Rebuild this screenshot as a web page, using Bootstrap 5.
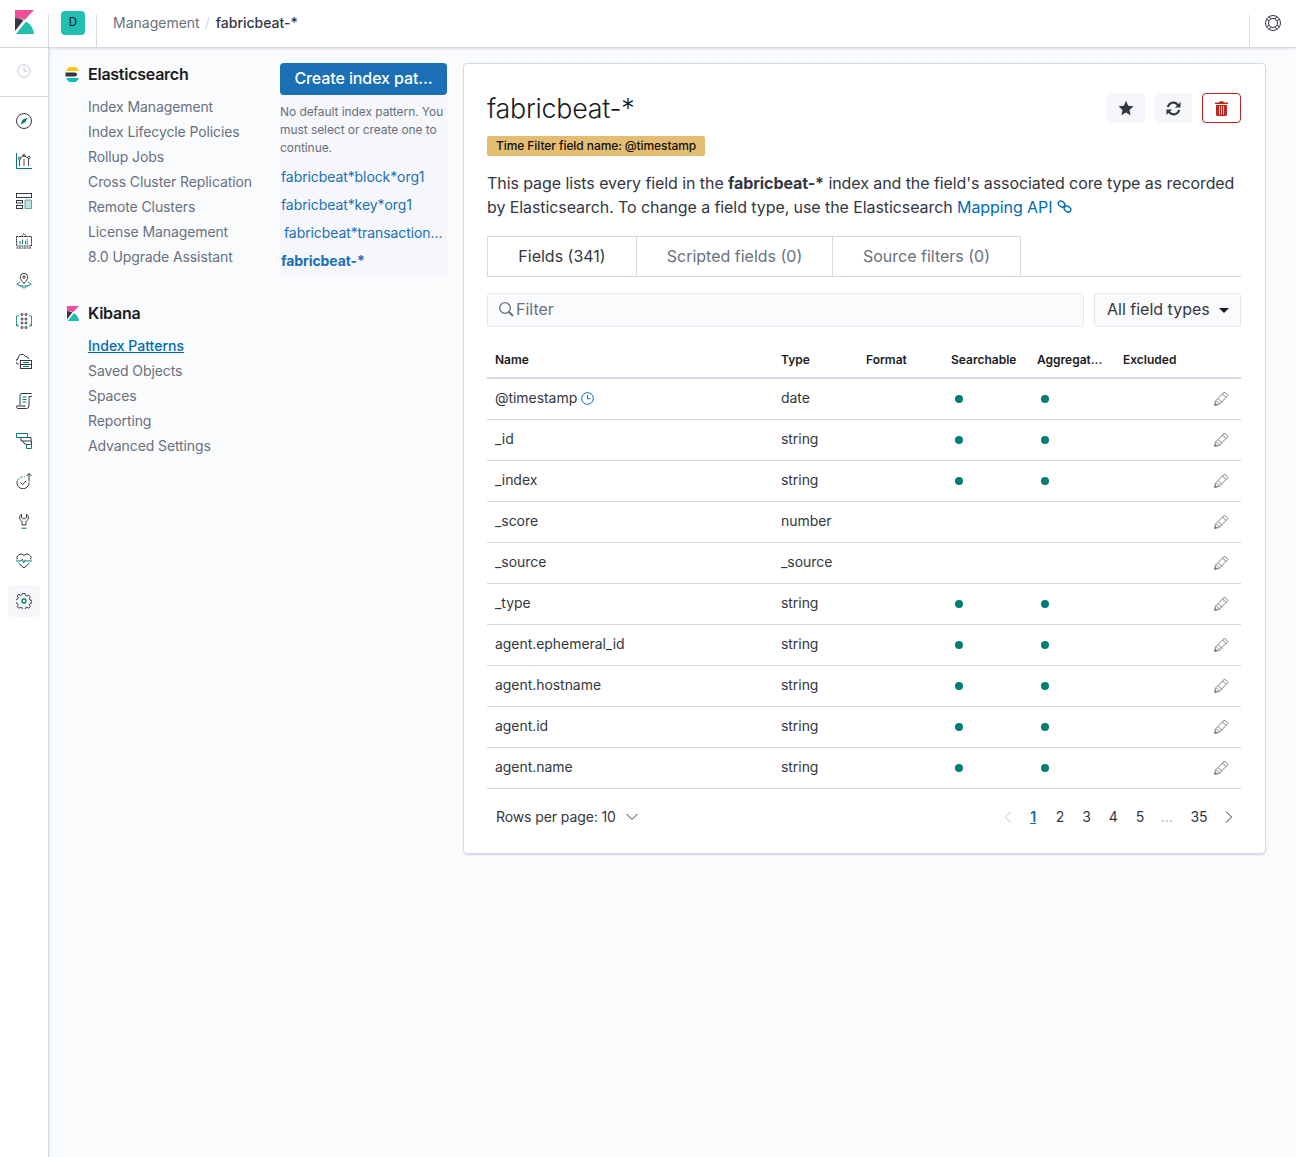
<!DOCTYPE html>
<html lang="en">
<head>
<meta charset="utf-8">
<title>fabricbeat-*</title>
<link href="https://cdn.jsdelivr.net/npm/bootstrap@5.3.0/dist/css/bootstrap.min.css" rel="stylesheet">
<style>
html,body{height:100%}
body{font-family:Inter,"Liberation Sans",sans-serif;background:#fafbfd;color:#343741;font-size:14px;width:1296px;overflow-x:hidden}
a{text-decoration:none}
.k-top{height:48px;background:#fff;border-bottom:1px solid #d3dae6;box-shadow:0 2px 2px -1px rgba(152,162,179,.3)}
.k-logo-cell{width:49px;height:48px;padding:10px 0 0 15px}
.k-top-sep{width:1px;height:33px;background:#d3dae6;margin-top:15px}
.k-sep-first{margin-left:-1px}
.k-avatar-cell{width:47px;padding:11px 0 0 12px}
.k-avatar{width:24px;height:24px;background:#20bfb1;border-radius:4px;font-size:11.5px;color:#111;line-height:22px;text-align:center}
.k-crumb{padding-left:16px;line-height:46px;color:#69707d;font-size:14px}
.k-crumb i{font-style:normal;color:#d3dae6;margin:0 6px 0 5px}
.k-crumb b{font-weight:500;color:#343741}
.k-help{width:46px;padding:15px 0 0 15px}
.k-help svg{display:block}
.k-main{height:1109px}
.k-rail{width:49px;background:#fff;border-right:1px solid #d3dae6;box-shadow:1px 0 2px rgba(152,162,179,.2);flex:none}
.k-recent{height:49px;border-bottom:1px solid #d3dae6;padding-top:16px;text-align:center}
.k-rail-list{padding-top:4px}
.k-rail-item{height:40px;display:flex;align-items:center;justify-content:center;width:32px;margin-left:8px;border-radius:4px}
.k-rail-item.on{background:#f5f7fa;height:32px;margin-top:4px}
.k-rail svg{display:block}
.k-side{width:231px;padding:16px 0 0 16px;flex:none}
.k-side-h{display:flex;align-items:center;height:20px;font-size:16px;font-weight:600;color:#1a1c21;gap:8px;margin-bottom:10px;letter-spacing:-.25px}
.k-kib-logo{margin:0 1px 0 2px}
.k-side-list{margin-left:23px}
.k-side-list a{display:block;height:25px;line-height:25px;color:#69707d;font-size:14px;letter-spacing:-.1px}
.k-side-list a.on{color:#006bb4;font-weight:500;text-decoration:underline;letter-spacing:0}
.k-gap{height:34px}
.k-index{width:167px;margin-top:15px;flex:none;margin-right:16px}
.k-create{background:#1a6fb5;color:#fff;border:0;width:167px;height:32px;border-radius:4px;font-size:16px;font-weight:500;padding:0 0 2px;box-shadow:0 2px 2px -1px rgba(54,97,126,.3);display:block;letter-spacing:-.1px}
.k-index-body{background:#f5f7fa;height:182px;padding-top:8px}
.k-index-note{font-size:12px;line-height:18px;color:#69707d;margin:0 0 6px;height:54px;letter-spacing:-.07px}
.k-index-list a{display:block;height:28px;line-height:28px;color:#1a6fb5;font-size:14px;padding-left:1px;white-space:nowrap;letter-spacing:-.09px}
.k-index-list a.tr{padding-left:4px}
.k-index-list a.on{font-weight:700;color:#1a6fb5}
.k-panel{width:803px;height:791px;margin-top:15px;background:#fff;border:1px solid #d3dae6;border-radius:4px;box-shadow:0 2px 2px -1px rgba(152,162,179,.3),0 1px 5px -2px rgba(152,162,179,.3);padding:24px 24px 0 23px;flex:none}
.k-title{font-size:26.8px;font-weight:300;color:#1a1c21;line-height:40px;margin:0;letter-spacing:-.25px}
.k-acts{gap:10px;padding-top:5px}
.k-act{width:39px;height:30px;border-radius:4px;background:#f5f7fa;border:0;display:flex;align-items:center;justify-content:center;padding:0}
.k-act-mid{width:37px}
.k-act-del{background:#fff;border:1px solid #bd271e}
.k-time{display:inline-block;background:#e4bd73;font-size:12px;font-weight:500;color:#111;height:20px;line-height:20px;padding:0 9px;border-radius:2px;margin-top:8px;letter-spacing:-.08px}
.k-desc{font-size:16px;line-height:24px;margin:15px 0 0;color:#343741;letter-spacing:-.08px}
.k-desc b{font-weight:700}
.k-desc a{color:#006bb4}
.k-link-ic{vertical-align:-1px}
.k-tabs{display:flex;margin-top:17px;border-bottom:1px solid #d3dae6;height:41px}
.k-tab{height:40px;border:1px solid #d3dae6;border-bottom:0;margin-left:-1px;line-height:39px;font-size:16px;color:#69707d;text-align:center;background:#fff}
.k-tab:first-child{margin-left:0;color:#343741;width:150px}
.k-tab.t2{width:197px}.k-tab.t3{width:189px}
.k-filters{display:flex;gap:10px;margin-top:16px}
.k-filter{width:597px;height:34px;background:#fafbfd;border:1px solid #e3e7ef;border-radius:3px;display:flex;align-items:center;padding:0 0 2px 10px;font-size:16px;color:#69707d;gap:2px}
.k-select{width:147px;height:34px;background:#fafbfd;border:1px solid #e3e7ef;border-radius:3px;font-size:16px;color:#343741;padding-left:12px;line-height:30px;position:relative}
.k-select::after{content:"";position:absolute;right:11px;top:14px;border:5px solid transparent;border-top:5px solid #1a1c21;border-bottom:0}
.k-table{width:754px;table-layout:fixed;margin:16px 0 0;border-collapse:collapse;font-size:14px;color:#343741;letter-spacing:-.05px}
.k-table th{font-size:12px;font-weight:600;color:#1a1c21;padding:0 8px;height:35px;border-bottom:2px solid #d3dae6;white-space:nowrap;vertical-align:middle;letter-spacing:0}
.k-table td{height:41px;padding:0 8px;border-bottom:1px solid #d3dae6;vertical-align:middle;padding-bottom:2px}
.k-c1{width:286px}.k-c2{width:85px}.k-c4{width:86px}
.k-dot{display:block;width:8px;height:8px;border-radius:50%;background:#017d73;margin:2px 0 0 4px}
.k-pencil{display:block;margin:2px 4px 0 auto}
.k-clock{vertical-align:-2px;margin-left:0}
.k-foot{display:flex;justify-content:space-between;align-items:center;margin-top:16px;height:24px;padding:0 7px 0 9px}
.k-rows{display:flex;align-items:center;gap:9px;font-size:14px;letter-spacing:-.1px}
.k-pages{display:flex;align-items:center;font-size:14px;color:#343741}
.k-pages span{display:block;text-align:center}
.k-pg{width:26.7px}
.k-pg.on{color:#006bb4;font-weight:600;text-decoration:underline}
.k-pg.off{color:#abb4c4}
.k-pg.last{width:36px;padding-left:2px}
.k-prev{margin-right:7px}
</style>
</head>
<body>
<header class="k-top d-flex">
  <div class="k-logo-cell">
    <svg width="19" height="24" viewBox="0 0 19 24" style="display:block"><path fill="#f04e98" d="M0 0h19L9.500 10A20 20 0 0 0 0 8z"/><path fill="#343741" d="M0 8a20 20 0 0 1 8.500 2.200L0 21z"/><path fill="#20bfb1" d="M11 11.500 1 24h18a16 16 0 0 0-8-12.500z"/></svg>
  </div>
  <div class="k-top-sep k-sep-first"></div>
  <div class="k-avatar-cell"><div class="k-avatar">D</div></div>
  <div class="k-top-sep"></div>
  <div class="k-crumb flex-grow-1">Management<i>/</i><b>fabricbeat-*</b></div>
  <div class="k-top-sep"></div>
  <div class="k-help">
    <svg width="16" height="16" viewBox="0 0 16 16" fill="none" stroke="#343741"><circle cx="8" cy="8" r="7.500"/><circle cx="8" cy="8" r="4.500"/><path d="M11.900 5.750 14.500 4.250M10.250 4.100 11.750 1.500M4.100 5.750 1.500 4.250M5.750 4.100 4.250 1.500M11.900 10.250 14.500 11.750M10.250 11.900 11.750 14.500M4.100 10.250 1.500 11.750M5.750 11.900 4.250 14.500"/></svg>
  </div>
</header>
<div class="k-main d-flex">
  <nav class="k-rail">
    <div class="k-recent"><svg class="mx-auto" width="14" height="14" viewBox="0 0 14 14" fill="none" stroke="#c2c8d2"><circle cx="7" cy="7" r="6.200"/><path d="M7 3v4.200h3.200"/></svg></div>
    <div class="k-rail-list">
      <div class="k-rail-item"><svg width="16" height="16" viewBox="0 0 16 16" fill="none" stroke="#343741"><circle cx="8" cy="8" r="7.500"/><path fill="#017d73" stroke="none" d="M11.500 4.500 9.300 9.300 4.500 11.500l2.200-4.800z"/></svg></div>
      <div class="k-rail-item"><svg width="16" height="16" viewBox="0 0 16 16" fill="none" stroke="#343741" stroke-width=".9"><path stroke="#017d73" stroke-width="1" d="M.5 0v15.500H16"/><path d="M3.500 13V7M8 13V6M12.500 13V6M3.500 5.500 7.500 2.500l4.500 2.500"/><circle cx="3.500" cy="5.500" r="1.200"/><circle cx="8" cy="2.500" r="1.200"/><circle cx="13" cy="4.500" r="1.200"/></svg></div>
      <div class="k-rail-item"><svg width="16" height="16" viewBox="0 0 16 16" fill="none" stroke="#343741"><rect x=".5" y=".5" width="15" height="4"/><rect x=".5" y="7.500" width="6" height="2.500"/><rect x=".5" y="12.500" width="6" height="3"/><path fill="#bfe3e0" stroke="#017d73" stroke-opacity=".6" d="M9 7h6.500v8.500H9z"/></svg></div>
      <div class="k-rail-item"><svg width="16" height="16" viewBox="0 0 16 16" fill="none" stroke="#343741"><path d="M.5 3.500h15v9.500H.5zM5 3.500 8 .5l3 3M.5 15h15" stroke-dasharray="2 .5"/><path stroke="#017d73" d="M4 11V8M6.500 11V6.500M9.500 11V8M12 7h-1.500M12 9h-1.500M12 11h-1.500"/></svg></div>
      <div class="k-rail-item"><svg width="16" height="16" viewBox="0 0 16 16" fill="none" stroke="#343741"><path d="M8 10.500C5.500 7.500 4.200 6 4.200 4.200a3.800 3.800 0 0 1 7.600 0C11.800 6 10.500 7.500 8 10.500z"/><circle cx="8" cy="4.200" r="1.200"/><path stroke="#017d73" stroke-opacity=".8" d="M4 9 .8 11 8 15.200 15.200 11 12 9M2.500 12.500 8 13l5.500-.5"/></svg></div>
      <div class="k-rail-item"><svg width="16" height="16" viewBox="0 0 16 16" fill="none" stroke="#343741"><circle cx="6" cy="1.500" r="1"/><circle cx="10" cy="1.500" r="1"/><circle cx="6" cy="6" r="1"/><circle cx="10" cy="6" r="1"/><circle cx="6" cy="10" r="1"/><circle cx="10" cy="10" r="1"/><circle cx="6" cy="14.500" r="1"/><circle cx="10" cy="14.500" r="1"/><path stroke="#017d73" stroke-opacity=".8" d="M3 3H.5v10H3M13 3h2.500v10H13M1 11l1.500 1.500M15 11l-1.500 1.500"/></svg></div>
      <div class="k-rail-item"><svg width="16" height="16" viewBox="0 0 16 16" fill="none" stroke="#343741"><path d="M3 11H2.500A2.500 2.500 0 0 1 2 6a4 4 0 0 1 7.500-2.500A3.500 3.500 0 0 1 13 6"/><rect x="4.500" y="7.500" width="11" height="8"/><path d="M4.500 11.500h11"/><path stroke="#017d73" d="M7 9.500h6M7 13.500h6"/></svg></div>
      <div class="k-rail-item"><svg width="16" height="16" viewBox="0 0 16 16" fill="none" stroke="#343741"><path d="M4 12.500V2.500A2 2 0 0 1 6 .5h9.500M15.500.5a1.500 1.500 0 0 1-1.500 3h-1V13a2.500 2.500 0 0 1-2.500 2.500H2A1.800 1.800 0 0 1 .5 13H9v1"/><path stroke="#017d73" d="M6.500 4h4M6.500 6.500h4M6.500 9h4"/></svg></div>
      <div class="k-rail-item"><svg width="16" height="16" viewBox="0 0 16 16" fill="none" stroke="#343741"><path stroke="#017d73" d="M.5.500h11v4H.5zM10.500 11.500h5v4h-5z"/><path d="M5 4.500 5 8h10V4.500h-3.500M7 8a4 4 0 0 0 4 3.500M15.500 8v3.500"/></svg></div>
      <div class="k-rail-item"><svg width="16" height="16" viewBox="0 0 16 16" fill="none" stroke="#343741"><path d="M13 .5v8M10.500 3 13 .5 15.500 3"/><path d="M13 9.500A6 6 0 0 1 1 10a6 6 0 0 1 .5-2.500"/><path stroke="#017d73" stroke-dasharray="2 1.500" d="M2 7a6 6 0 0 1 7-3"/><path d="M4.500 9.500 6.500 11.500 10 8"/></svg></div>
      <div class="k-rail-item"><svg width="16" height="16" viewBox="0 0 16 16" fill="none" stroke="#343741"><path d="M5.500 1.200A4 4 0 0 0 5.500 8c.7.500.5 1.500.5 4h4c0-2.500-.2-3.500.5-4a4 4 0 0 0 0-6.800V4.500L8 6 5.500 4.500z"/><path stroke="#017d73" d="M5.500 15.200h5"/></svg></div>
      <div class="k-rail-item"><svg width="16" height="16" viewBox="0 0 16 16" fill="none" stroke="#343741"><path d="M1.200 6.500A4 4 0 0 1 8 2.500a4 4 0 0 1 6.800 4M2.500 10 8 15l5.500-5"/><path stroke="#017d73" d="M0 8h5l1.200-1.800L7.800 10 9.200 6.800 10.300 8H16"/></svg></div>
      <div class="k-rail-item on"><svg width="16" height="16" viewBox="0 0 16 16" fill="none" stroke="#343741"><path d="M6.700.5h2.600l.4 2 1.500.7 1.800-1.100 1.800 1.800-1.100 1.800.7 1.500 2 .4v2.600l-2 .4-.7 1.500 1.100 1.800-1.800 1.800-1.800-1.100-1.500.7-.4 2H6.700l-.4-2-1.500-.7-1.800 1.100-1.800-1.800 1.100-1.800-.7-1.500-2-.4V6.700l2-.4.7-1.500-1.100-1.800 1.800-1.800 1.800 1.100 1.500-.7z" transform="scale(.97)"/><circle cx="8" cy="8" r="2" stroke="#017d73" stroke-width="1.300"/></svg></div>
    </div>
  </nav>
  <aside class="k-side">
    <div class="k-side-h"><svg width="15" height="15" viewBox="0 0 15 15"><path fill="#fec514" d="M1.200 4A6.600 6.600 0 0 1 13.800 4z"/><path fill="#343741" d="M.5 5.500h9.500a2 2 0 0 1 0 4H.5z"/><path fill="#00bfb3" d="M1.200 11h12.600A6.600 6.600 0 0 1 1.200 11z"/></svg>Elasticsearch</div>
    <div class="k-side-list">
      <a href="#">Index Management</a><a href="#">Index Lifecycle Policies</a><a href="#">Rollup Jobs</a><a href="#">Cross Cluster Replication</a><a href="#">Remote Clusters</a><a href="#">License Management</a><a href="#">8.0 Upgrade Assistant</a>
    </div>
    <div class="k-gap"></div>
    <div class="k-side-h"><svg class="k-kib-logo" width="12" height="15" viewBox="0 0 19 24" preserveAspectRatio="none"><path fill="#f04e98" d="M0 0h19L9.500 10A20 20 0 0 0 0 8z"/><path fill="#343741" d="M0 8a20 20 0 0 1 8.500 2.200L0 21z"/><path fill="#20bfb1" d="M11 11.500 1 24h18a16 16 0 0 0-8-12.500z"/></svg>Kibana</div>
    <div class="k-side-list">
      <a href="#" class="on">Index Patterns</a><a href="#">Saved Objects</a><a href="#">Spaces</a><a href="#">Reporting</a><a href="#">Advanced Settings</a>
    </div>
  </aside>
  <section class="k-index">
    <button class="k-create" type="button">Create index pat...</button>
    <div class="k-index-body">
      <p class="k-index-note">No default index pattern. You must select or create one to continue.</p>
      <div class="k-index-list">
        <a href="#">fabricbeat*block*org1</a>
        <a href="#">fabricbeat*key*org1</a>
        <a href="#" class="tr">fabricbeat*transaction...</a>
        <a href="#" class="on">fabricbeat-*</a>
      </div>
    </div>
  </section>
  <main class="k-panel">
    <div class="d-flex justify-content-between">
      <div>
        <h1 class="k-title">fabricbeat-*</h1>
        <span class="k-time">Time Filter field name: @timestamp</span>
      </div>
      <div class="d-flex k-acts align-items-start">
        <button class="k-act" type="button" aria-label="Favorite"><svg width="16" height="16" viewBox="0 0 16 16"><path fill="#343741" d="M8 .8l2.200 4.900 5.300.6-4 3.600 1.100 5.300L8 12.500l-4.600 2.700 1.100-5.300-4-3.600 5.300-.6z"/></svg></button>
        <button class="k-act k-act-mid" type="button" aria-label="Refresh"><svg width="15" height="15" viewBox="0 0 16 16" fill="none" stroke="#343741" stroke-width="2.200"><path d="M2 6.500A6 6 0 0 1 12.500 4L14 5.500"/><path d="M14 9.500A6 6 0 0 1 3.500 12L2 10.500"/><path fill="#343741" stroke="none" d="M15.500 1v6h-6zM.5 15V9h6z"/></svg></button>
        <button class="k-act k-act-del" type="button" aria-label="Delete"><svg width="13" height="15" viewBox="0 0 13 15"><path fill="#bd271e" d="M4 1.500 4.800.3h3.400L9 1.500h4V3H0V1.500zM1 4h11v9.500a1.500 1.500 0 0 1-1.500 1.500h-8A1.500 1.500 0 0 1 1 13.500z"/><path stroke="#f3c4c1" d="M4.500 5v8.500M6.500 5v8.500M8.500 5v8.500"/></svg></button>
      </div>
    </div>
    <p class="k-desc">This page lists every field in the <b>fabricbeat-*</b> index and the field's associated core type as recorded by Elasticsearch. To change a field type, use the Elasticsearch <a href="#">Mapping API</a> <svg class="k-link-ic" width="15" height="14" viewBox="0 0 15 14" fill="none" stroke="#006bb4" stroke-width="1.400"><rect x="7" y="6.500" width="7" height="5" rx="2.500" transform="rotate(35 10.500 9)"/><rect x="1" y="1.500" width="7" height="5" rx="2.500" transform="rotate(35 4.500 4)"/></svg></p>
    <div class="k-tabs">
      <div class="k-tab">Fields (341)</div>
      <div class="k-tab t2">Scripted fields (0)</div>
      <div class="k-tab t3">Source filters (0)</div>
    </div>
    <div class="k-filters">
      <div class="k-filter"><svg width="16" height="16" viewBox="0 0 16 16" fill="none" stroke="#69707d" stroke-width="1.300"><circle cx="7" cy="7" r="5.300"/><path stroke-width="2" d="M11 11l4 4"/></svg>Filter</div>
      <div class="k-select">All field types</div>
    </div>
    <table class="k-table">
      <colgroup><col class="k-c1"><col class="k-c2"><col class="k-c2"><col class="k-c4"><col class="k-c4"><col class="k-c2"><col></colgroup>
      <thead><tr><th>Name</th><th>Type</th><th>Format</th><th>Searchable</th><th>Aggregat...</th><th>Excluded</th><th></th></tr></thead>
      <tbody id="k-rows"></tbody>
    </table>
    <div class="k-foot">
      <div class="k-rows">Rows per page: 10 <svg width="14" height="8" viewBox="0 0 14 8" fill="none" stroke="#343741"><path d="M1.500 1 7 6.500 12.500 1"/></svg></div>
      <div class="k-pages">
        <svg class="k-prev" width="10" height="14" viewBox="0 0 10 14" fill="none" stroke="#c2c8d2"><path d="M8 1.500 2.500 7 8 12.500"/></svg>
        <span class="k-pg on">1</span><span class="k-pg">2</span><span class="k-pg">3</span><span class="k-pg">4</span><span class="k-pg">5</span><span class="k-pg off">...</span><span class="k-pg last">35</span>
        <svg class="ms-2" width="10" height="14" viewBox="0 0 10 14" fill="none" stroke="#343741"><path d="M2 1.500 7.500 7 2 12.500"/></svg>
      </div>
    </div>
  </main>
</div>
<script>
var pencil='<svg class="k-pencil" width="15" height="15" viewBox="0 0 15 15" fill="none" stroke="#7a7f8a"><path d="M10.500 1 14 4.500 5 13.500l-4.500 1 1-4.500zM2.500 10l3.500 3.500M4.500 8l3.500 3.500M8.500 3l3.500 3.500"/><path fill="#7a7f8a" stroke="none" d="M.5 14.500l.7-3 2.300 2.300z"/></svg>';
var clock=' <svg class="k-clock" width="13" height="13" viewBox="0 0 13 13" fill="none" stroke="#006bb4"><circle cx="6.500" cy="6.500" r="5.800"/><path d="M6.500 3v3.700h3"/></svg>';
var rows=[['@timestamp','date',1],['_id','string',1],['_index','string',1],['_score','number',0],['_source','_source',0],['_type','string',1],['agent.ephemeral_id','string',1],['agent.hostname','string',1],['agent.id','string',1],['agent.name','string',1]];
document.getElementById('k-rows').innerHTML=rows.map(function(r,i){var d=r[2]?'<span class="k-dot"></span>':'';return '<tr><td>'+r[0]+(i==0?clock:'')+'</td><td>'+r[1]+'</td><td></td><td>'+d+'</td><td>'+d+'</td><td></td><td>'+pencil+'</td></tr>';}).join('');
</script>
<script src="https://cdn.jsdelivr.net/npm/bootstrap@5.3.0/dist/js/bootstrap.bundle.min.js"></script>
</body>
</html>
